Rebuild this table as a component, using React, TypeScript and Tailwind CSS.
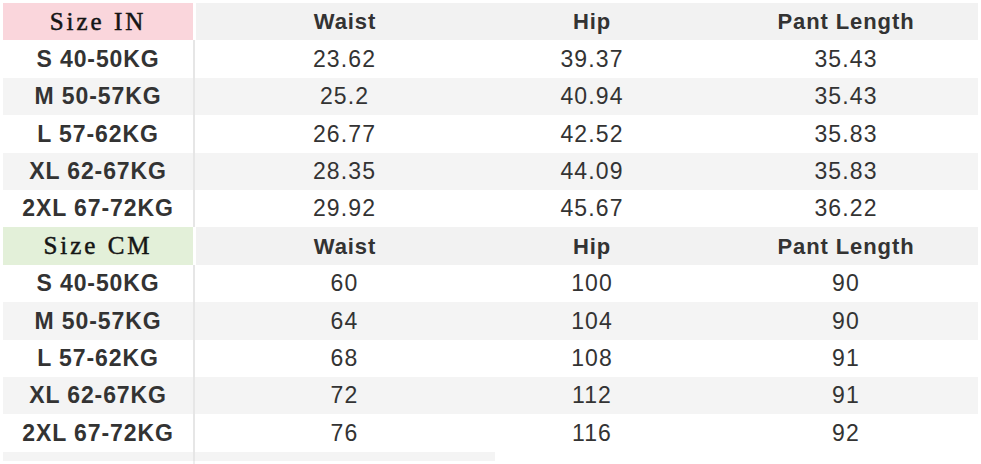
import React from 'react';

type Row = [string, string, string, string];

const inRows: Row[] = [
  ['S 40-50KG', '23.62', '39.37', '35.43'],
  ['M 50-57KG', '25.2', '40.94', '35.43'],
  ['L 57-62KG', '26.77', '42.52', '35.83'],
  ['XL 62-67KG', '28.35', '44.09', '35.83'],
  ['2XL 67-72KG', '29.92', '45.67', '36.22'],
];

const cmRows: Row[] = [
  ['S 40-50KG', '60', '100', '90'],
  ['M 50-57KG', '64', '104', '90'],
  ['L 57-62KG', '68', '108', '91'],
  ['XL 62-67KG', '72', '112', '91'],
  ['2XL 67-72KG', '76', '116', '92'],
];

const sans = { fontFamily: '"Liberation Sans", Arial, sans-serif' };

function HeaderRow({ label, tint }: { label: string; tint: string }) {
  return (
    <div className="flex h-[37.4px] items-stretch bg-[#f2f2f2] text-[22px] font-bold tracking-[0.9px] text-[#333]">
      <div
        className={`flex w-[190px] items-center justify-center ${tint} text-[25px] font-normal tracking-[3px] text-[#151515] [-webkit-text-stroke:0.5px_#151515]`}
        style={{ fontFamily: '"Liberation Serif", "Times New Roman", serif' }}
      >
        {label}
      </div>
      <div className="w-[3px] bg-white" />
      <div className="flex w-[298px] items-center justify-center">Waist</div>
      <div className="flex w-[196px] items-center justify-center">Hip</div>
      <div className="flex w-[288px] items-center justify-center pl-6">Pant Length</div>
    </div>
  );
}

function DataRow({ row, shaded }: { row: Row; shaded: boolean }) {
  return (
    <div
      className={`flex h-[37.4px] items-stretch text-[23px] tracking-[1.1px] text-[#333] ${
        shaded ? 'bg-[#f4f4f4]' : 'bg-white'
      }`}
    >
      <div className="flex w-[190px] items-center justify-center font-bold tracking-[0.9px]">{row[0]}</div>
      <div className="w-[2px] bg-[#e6e6e6]" />
      <div className="flex w-[299px] items-center justify-center">{row[1]}</div>
      <div className="flex w-[196px] items-center justify-center">{row[2]}</div>
      <div className="flex w-[288px] items-center justify-center pl-6">{row[3]}</div>
    </div>
  );
}

export default function App() {
  return (
    <div className="h-[464px] w-[981px] overflow-hidden bg-white pl-[3px] pt-[3px]" style={sans}>
      <div className="w-[975px]">
        <HeaderRow label="Size IN" tint="bg-[#fad6dc]" />
        {inRows.map((r, i) => (
          <DataRow key={`in-${i}`} row={r} shaded={i % 2 === 1} />
        ))}
        <HeaderRow label="Size CM" tint="bg-[#e3f0d9]" />
        {cmRows.map((r, i) => (
          <DataRow key={`cm-${i}`} row={r} shaded={i % 2 === 1} />
        ))}
        {/* cut-off bottom strip */}
        <div className="flex h-[9px] w-[492px] bg-[#f4f4f4]">
          <div className="w-[190px]" />
          <div className="w-[2px] bg-[#e6e6e6]" />
        </div>
        <div className="flex h-[12px]">
          <div className="w-[190px]" />
          <div className="w-[2px] bg-[#eeeeee]" />
        </div>
      </div>
    </div>
  );
}
